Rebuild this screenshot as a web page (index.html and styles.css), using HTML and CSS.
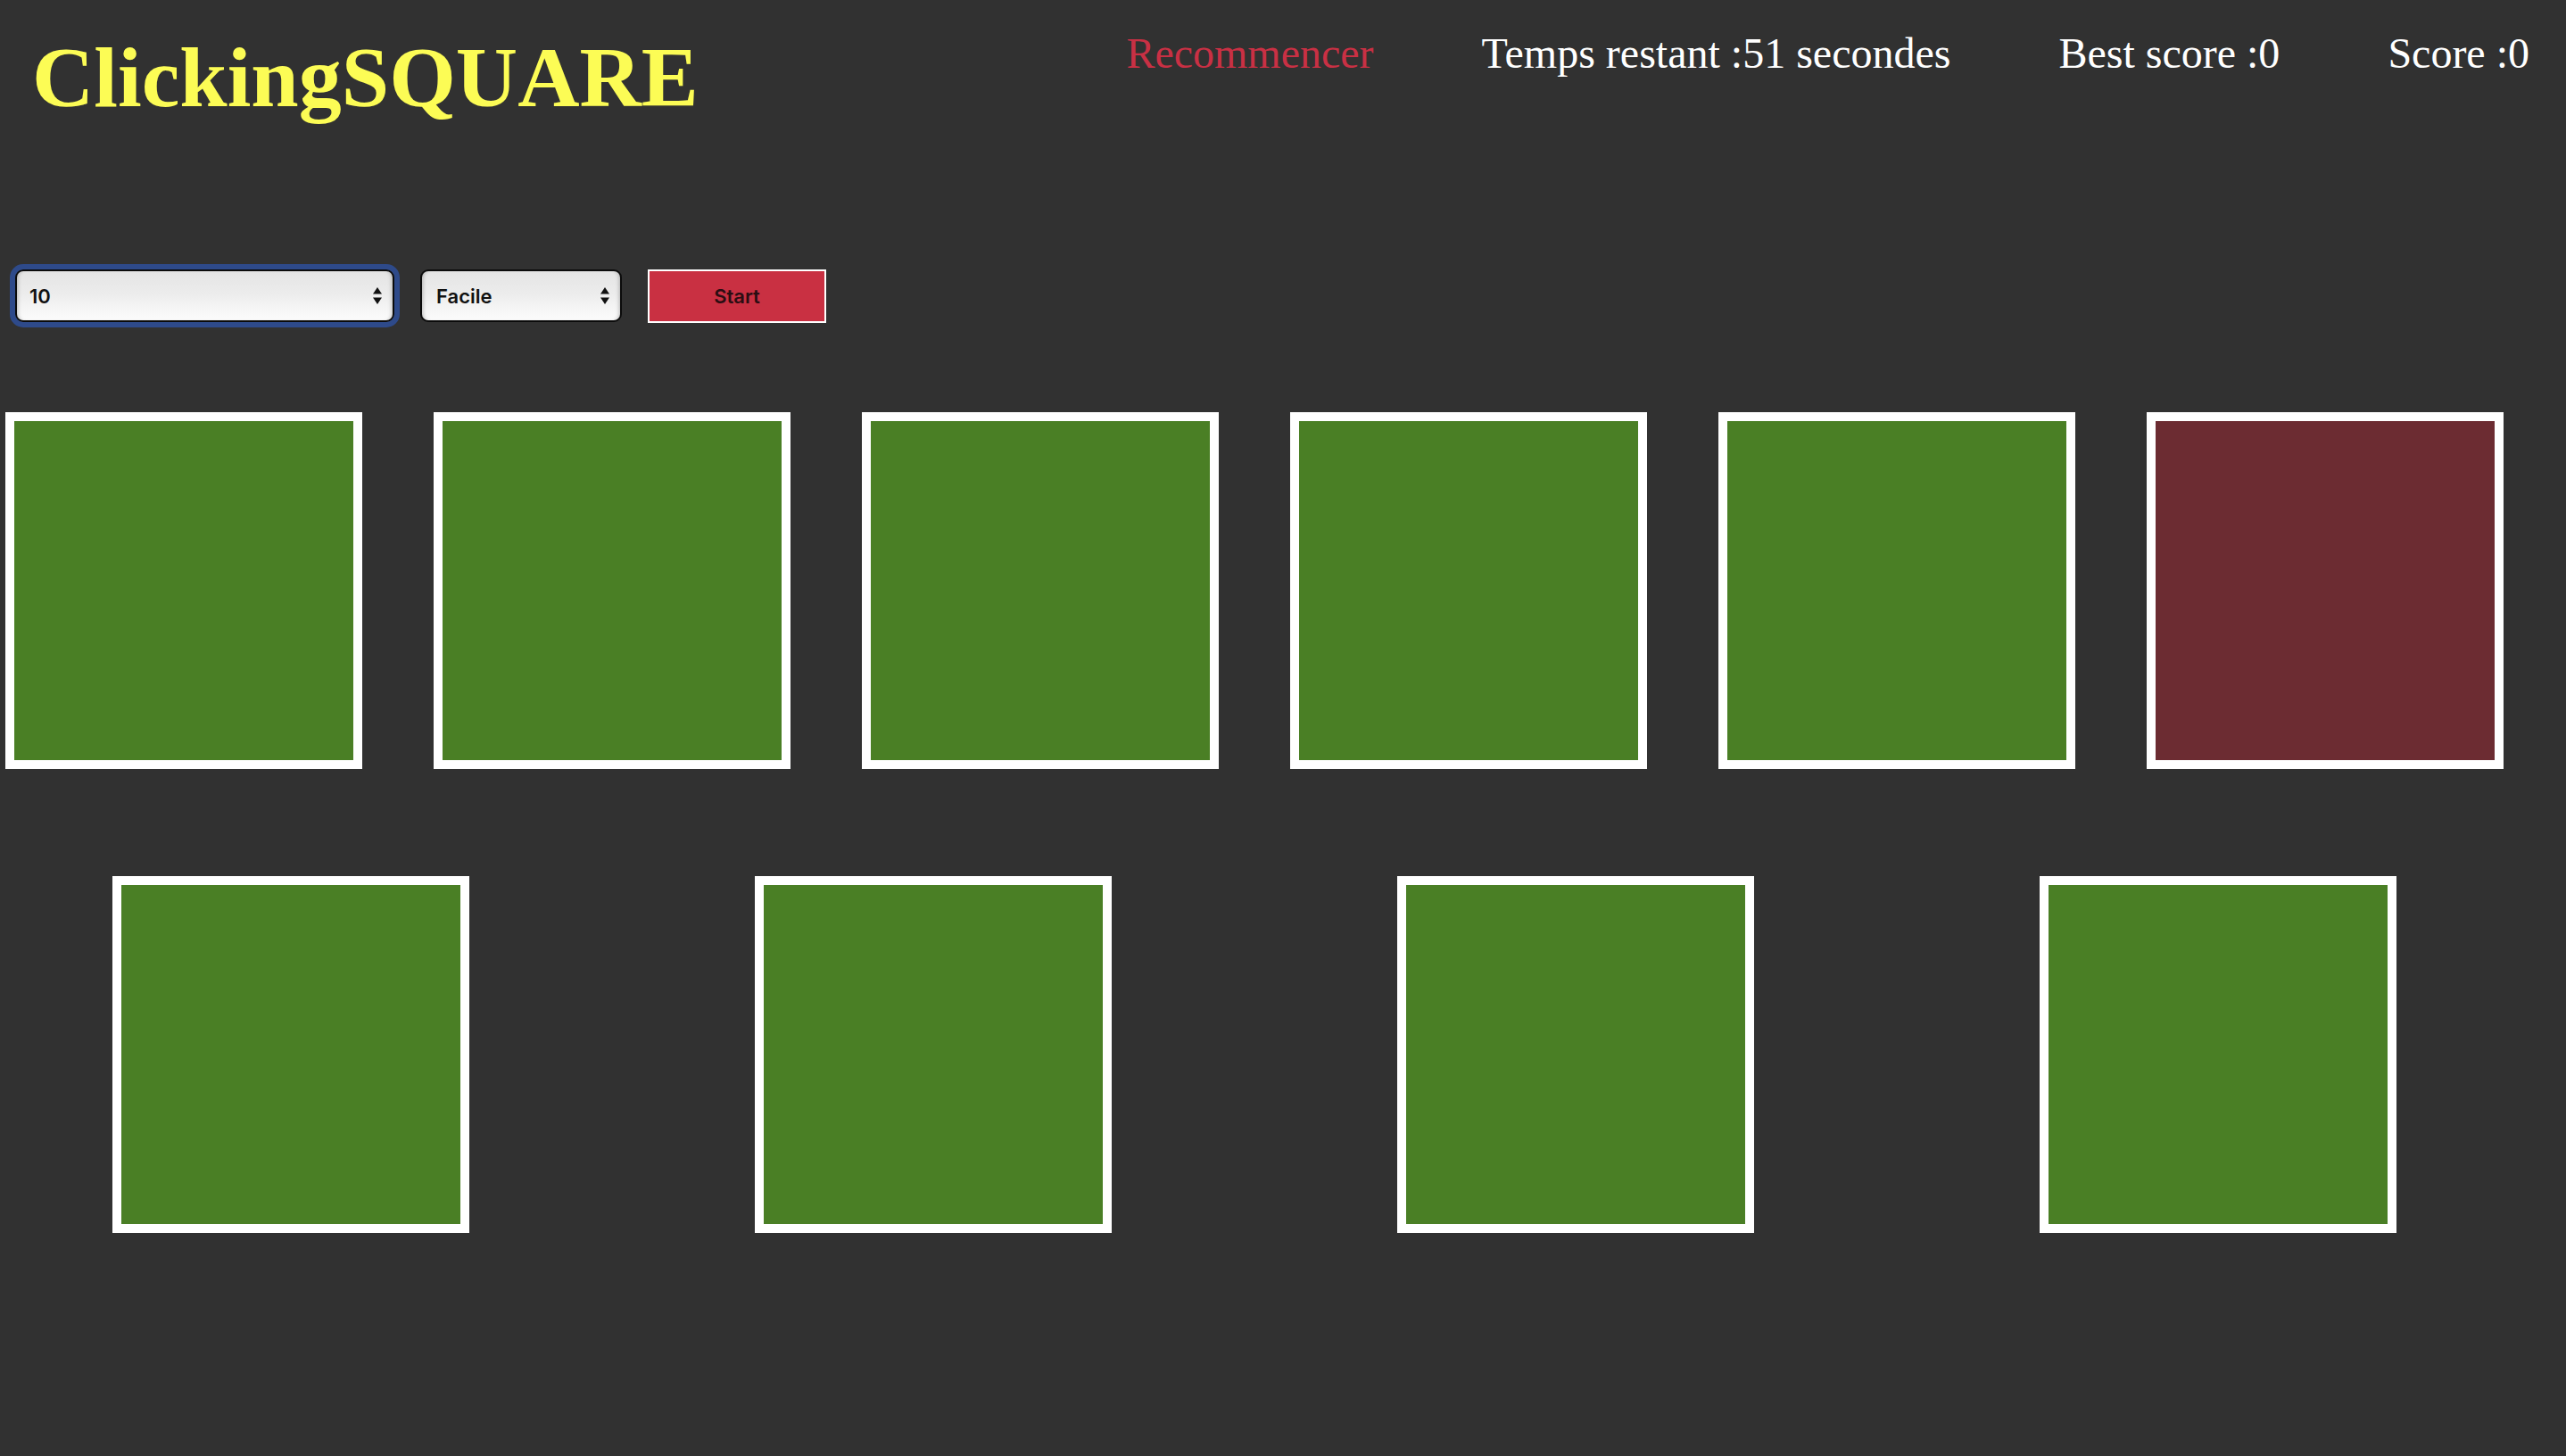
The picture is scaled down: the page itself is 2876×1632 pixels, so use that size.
FILE: index.html
```html
<!DOCTYPE html>
<html lang="fr">
<head>
<meta charset="utf-8">
<title>ClickingSQUARE</title>
<link rel="stylesheet" href="styles.css">
</head>
<body>
<header class="topbar">
  <h1 class="logo">ClickingSQUARE</h1>
  <nav class="stats">
    <a class="restart">Recommencer</a>
    <span class="stat">Temps restant :51 secondes</span>
    <span class="stat">Best score :0</span>
    <span class="stat">Score :0</span>
  </nav>
</header>
<section class="controls">
  <div class="select-wrap select-count focused">
    <select class="select"><option>10</option></select>
    <svg class="arrows" viewBox="0 0 10 19" width="10" height="19"><polygon points="5,0 10,7.5 0,7.5"/><polygon points="0,11.5 10,11.5 5,19"/></svg>
  </div>
  <div class="select-wrap select-level">
    <select class="select"><option>Facile</option></select>
    <svg class="arrows" viewBox="0 0 10 19" width="10" height="19"><polygon points="5,0 10,7.5 0,7.5"/><polygon points="0,11.5 10,11.5 5,19"/></svg>
  </div>
  <button class="start">Start</button>
</section>
<main class="board">
  <div class="square"></div>
  <div class="square"></div>
  <div class="square"></div>
  <div class="square"></div>
  <div class="square"></div>
  <div class="square target"></div>
  <div class="square"></div>
  <div class="square"></div>
  <div class="square"></div>
  <div class="square"></div>
</main>
</body>
</html>
```
FILE: styles.css
```css
html {
  background: #313131;
}
body {
  margin: 0;
  min-height: 1632px;
  background: #313131;
  font-family: "Liberation Serif", "Times New Roman", serif;
  overflow: hidden;
}
.topbar {
  display: flex;
  align-items: flex-start;
  padding: 36px 41px 0 36px;
  height: 266px;
  box-sizing: border-box;
}
.logo {
  margin: 3px 0 0 0;
  font-size: 96px;
  line-height: 1;
  font-weight: bold;
  color: #fcfc55;
}
.stats {
  margin-left: auto;
  display: flex;
  gap: 121px;
  font-size: 48px;
  line-height: 1;
  color: #ffffff;
}
.restart {
  color: #c93044;
  cursor: pointer;
}
.controls {
  display: flex;
  align-items: flex-start;
  gap: 29px;
  padding-left: 17px;
  margin-top: 36px;
  height: 60px;
}
.select-wrap {
  position: relative;
  display: flex;
}
.select {
  -webkit-appearance: none;
  appearance: none;
  height: 59px;
  box-sizing: border-box;
  border: 2px solid #0b0b0b;
  border-radius: 9px;
  background: linear-gradient(to bottom, #e4e4e4 0%, #ececec 45%, #fcfcfc 100%);
  box-shadow: inset 4px 0 4px -3px rgba(0,0,0,0.25), inset -4px 0 4px -3px rgba(0,0,0,0.25);
  font-family: Inter, "Liberation Sans", sans-serif;
  font-weight: 600;
  font-size: 22px;
  color: #111;
  padding: 0 0 0 14px;
  margin: 0;
}
.select-count .select {
  width: 425px;
}
.select-level .select {
  width: 226px;
  padding-left: 16px;
}
.focused .select {
  outline: 6px solid #2e4a8a;
  outline-offset: 0;
}
.arrows {
  position: absolute;
  right: 14px;
  top: 20px;
  fill: #111;
  pointer-events: none;
}
.start {
  width: 200px;
  height: 60px;
  margin: 0;
  box-sizing: border-box;
  border: 2px solid #ffffff;
  background: #c93042;
  color: #2a0d12;
  font-family: Inter, "Liberation Sans", sans-serif;
  font-weight: 600;
  font-size: 22px;
  padding: 0;
}
.board {
  display: flex;
  flex-wrap: wrap;
  justify-content: space-around;
  row-gap: 120px;
  width: 2880px;
  margin: 100px 0 0 -34px;
}
.square {
  width: 400px;
  height: 400px;
  margin: 0 40px;
  box-sizing: border-box;
  border: 10px solid #ffffff;
  background: #4a7f25;
}
.square.target {
  background: #6c2c32;
}
```
